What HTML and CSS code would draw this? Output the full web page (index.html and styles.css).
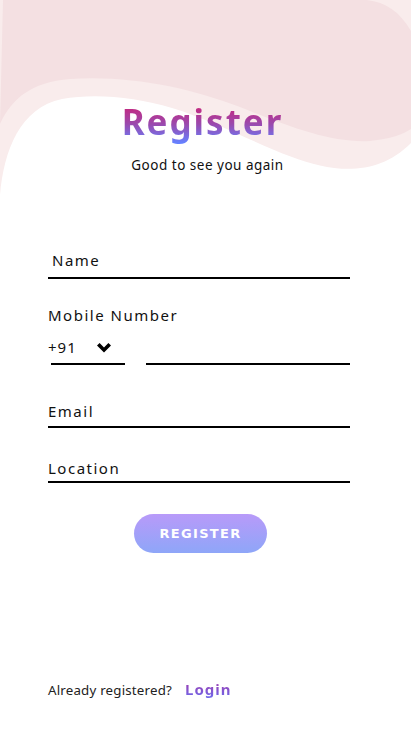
FILE: index.html
```html
<!DOCTYPE html>
<html lang="en">
<head>
<meta charset="utf-8">
<title>Register</title>
<link rel="stylesheet" href="styles.css">
</head>
<body>
<div class="page">
  <svg class="bg" width="411" height="200" viewBox="0 0 411 200" aria-hidden="true">
    <path class="bg-light" d="M0,195 C4,150 20,108 62,99 C95,93 135,97 172,108 C212,120 252,142 292,157 C332,172 376,178 411,143 V0 H0 Z"/>
    <path class="bg-dark" d="M3,0 L0,124 C12,98 32,82 70,79 C130,75 190,88 240,107 C290,127 330,143 370,141 C390,139 404,134 411,129 V31 C400,12 386,2 367,0 Z"/>
  </svg>
  <div class="content">
    <header class="head">
      <h1 class="title">Register</h1>
      <p class="subtitle">Good to see you again</p>
    </header>
    <form class="form">
      <div class="field field-name">
        <label class="label">Name</label>
        <div class="line"></div>
      </div>
      <div class="field field-mobile">
        <label class="label">Mobile Number</label>
        <div class="phone-row">
          <div class="code">
            <span class="code-text">+91</span>
            <svg class="chev" width="14" height="11" viewBox="0 0 14 11"><path d="M0,2.5 L2.6,0 L7,4.4 L11.4,0 L14,2.5 L7,9.5 Z"/></svg>
          </div>
          <div class="number"></div>
        </div>
      </div>
      <div class="field field-email">
        <label class="label">Email</label>
        <div class="line"></div>
      </div>
      <div class="field field-loc">
        <label class="label">Location</label>
        <div class="line"></div>
      </div>
      <button type="button" class="btn">REGISTER</button>
    </form>
    <footer class="foot">
      <span class="already">Already registered?</span>
      <a class="login">Login</a>
    </footer>
  </div>
</div>
</body>
</html>
```
FILE: styles.css
```css
* { box-sizing: border-box; }
html, body { margin: 0; padding: 0; background: #fff; }
.page {
  position: relative;
  width: 411px;
  height: 731px;
  overflow: hidden;
  background: #fff;
  font-family: "Noto Sans", "Open Sans", sans-serif;
  color: #111;
}
.bg { position: absolute; top: 0; left: 0; }
.bg-light { fill: #f9ecec; }
.bg-dark { fill: #f4e0e2; }
.content {
  position: relative;
  height: 100%;
  display: flex;
  flex-direction: column;
}
.head {
  padding-top: 99px;
  text-align: center;
}
.title {
  margin: 0 6px 0 0;
  font-size: 35px;
  line-height: 46px;
  font-weight: 700;
  letter-spacing: 2px;
  background: linear-gradient(180deg, #cc2277 10%, #9a4aae 55%, #6680ff 95%);
  -webkit-background-clip: text;
  background-clip: text;
  color: transparent;
  display: inline-block;
}
.subtitle {
  margin: 11px 0 0;
  font-size: 13.5px;
  line-height: 18px;
  letter-spacing: 0.5px;
  padding-left: 4px;
  color: #111;
}
.form {
  padding: 0 61px 0 48px;
  margin-top: 76px;
}
.field { display: flex; flex-direction: column; }
.label {
  font-size: 15px;
  line-height: 20px;
  letter-spacing: 1.5px;
  font-weight: 400;
  color: #111;
}
.field-name .label { padding-left: 4px; }
.line { height: 2px; background: #000; }
.field-name .line { margin-top: 7px; }
.field-email .line { margin-top: 5px; }
.field-loc .line { margin-top: 3px; }
.field-mobile { margin-top: 26px; }
.phone-row {
  display: flex;
  align-items: flex-end;
  margin-top: 12px;
}
.code {
  position: relative;
  width: 74px;
  margin-left: 3px;
  border-bottom: 2px solid #000;
}
.code-text {
  display: block;
  margin-left: -3px;
  font-size: 15px;
  line-height: 20px;
  letter-spacing: 1px;
  padding-bottom: 6px;
}
.chev { position: absolute; left: 46px; top: 6px; fill: #000; }
.number {
  flex: 1;
  margin-left: 21px;
  height: 2px;
  background: #000;
}
.field-email { margin-top: 36px; }
.field-loc { margin-top: 30px; }
.btn {
  display: block;
  margin: 31px 0 0 86px;
  width: 133px;
  height: 39px;
  border: none;
  border-radius: 20px;
  background: linear-gradient(180deg, #b89af9 0%, #8ea6f8 100%);
  color: #fff;
  font-family: "DejaVu Sans", "Open Sans", sans-serif;
  font-weight: 700;
  font-size: 13px;
  letter-spacing: 1.3px;
  padding: 0;
}
.foot {
  margin-top: auto;
  padding: 0 0 32px 48px;
  display: flex;
  align-items: baseline;
  gap: 13px;
}
.already {
  font-size: 13.3px;
  line-height: 18px;
  letter-spacing: 0.2px;
  color: #222;
}
.login {
  font-size: 15px;
  font-weight: 700;
  letter-spacing: 1px;
  background: linear-gradient(180deg, #9b3fb3 20%, #6a6cf0 100%);
  -webkit-background-clip: text;
  background-clip: text;
  color: transparent;
}
```
